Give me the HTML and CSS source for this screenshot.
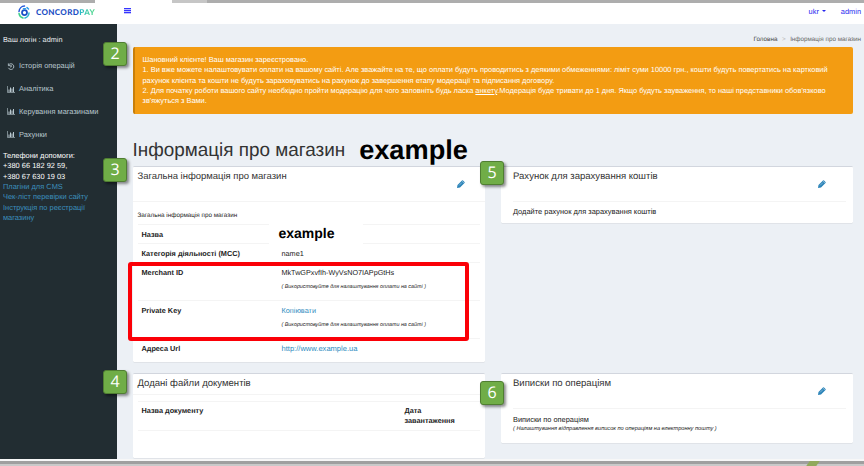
FILE: index.html
```html
<!DOCTYPE html>
<html lang="uk">
<head>
<meta charset="utf-8">
<title>ConcordPay</title>
<link rel="stylesheet" href="styles.css">
</head>
<body>
<svg class="defs" width="0" height="0">
  <symbol id="chart" viewBox="0 0 16 14"><path d="M1 0v13h15" fill="none" stroke="currentColor" stroke-width="1.2"/><path d="M3 7h2v5H3zM6 3h2v9H6zM9 5h2v7H9zM12 2h2v10h-2z" fill="currentColor"/></symbol>
  <symbol id="pencil" viewBox="0 0 16 16"><path d="M0 16l1-6 9-9q1-1 2 0l3 3q1 1 0 2l-9 9z" fill="currentColor"/><path d="M4 11l6-6M10 2l4 4" stroke="#fff" stroke-width=".8"/></symbol>
</svg>
<div class="page">
  <div class="edge"><i class="edge-gap"></i><i class="edge-light"></i></div>
  <header class="top">
    <a class="logo">
      <svg class="logo-mark" viewBox="0 0 24 28" fill="none" stroke-linecap="round" stroke-width="3">
        <path d="M13 2A11.500 12 0 0 0 2 13" stroke="#2457d8"/>
        <path d="M2 17A11.500 11.500 0 0 0 10 26" stroke="#3fd08a"/>
        <path d="M14 26A11.500 11.500 0 0 0 22 16" stroke="#2fb7d3"/>
        <circle cx="13" cy="15" r="5" stroke="#1c52c8" stroke-width="3.500"/>
        <path d="M11 7.500h4M18 5l3 3" stroke="#2b9bea"/>
      </svg>
      <span class="logo-text">CONCORD<b>PAY</b></span>
    </a>
    <span class="burger"><i></i><i></i><i></i></span>
    <nav class="user"><span class="lang">ukr</span><i class="caret"></i><span class="name">admin</span></nav>
  </header>
  <div class="body">
    <aside class="side">
      <div class="login">Ваш логін : admin</div>
      <a class="item"><svg viewBox="0 0 16 16"><path d="M3 4a6.500 6.500 0 1 1-1 7M2 1v5h5M8.500 5v4H6" fill="none" stroke="currentColor" stroke-width="2"/></svg><span>Історія операцій</span></a>
      <a class="item"><svg><use href="#chart"/></svg><span>Аналітика</span></a>
      <a class="item"><svg><use href="#chart"/></svg><span>Керування магазинами</span></a>
      <a class="item"><svg><use href="#chart"/></svg><span>Рахунки</span></a>
      <div class="help">
        <div>Телефони допомоги:</div><div>+380 66 182 92 59,</div><div>+380 67 630 19 03</div>
        <a>Плагіни для CMS</a><a>Чек-ліст перевірки сайту</a><a>Інструкція по реєстрації<br>магазину</a>
      </div>
    </aside>
    <main class="main">
      <div class="crumbs"><span class="home">Головна</span><i>&gt;</i><span>Інформація про магазин</span></div>
      <div class="alert">
        <div>Шановний клієнте! Ваш магазин зареєстровано.</div>
        <div>1. Ви вже можете налаштовувати оплати на вашому сайті. Але зважайте на те, що оплати будуть проводитись з деякими обмеженнями: ліміт суми 10000 грн., кошти будуть повертатись на картковий</div>
        <div>рахунок клієнта та кошти не будуть зараховуватись на рахунок до завершення етапу модерації та підписання договору.</div>
        <div>2. Для початку роботи вашого сайту необхідно пройти модерацію для чого заповніть будь ласка <u>анкету</u>.Модерація буде тривати до 1 дня. Якщо будуть зауваження, то наші представники обов'язково</div>
        <div>зв'яжуться з Вами.</div>
      </div>
      <h1><span>Інформація про магазин</span><b>example</b></h1>
      <div class="cards">
        <section class="card info">
          <div class="head tall"><h2>Загальна інформація про магазин</h2><svg class="edit"><use href="#pencil"/></svg></div>
          <div class="caption">Загальна інформація про магазин</div>
          <div class="table">
            <div class="row"><b>Назва</b><strong class="shop">example</strong></div>
            <div class="row"><b>Категорія діяльності (MCC)</b><span>name1</span></div>
            <div class="row high"><b>Merchant ID</b><div><span class="mid">MkTwGPxvfIh-WyVsNO7IAPpGtHs</span><em>( Використовуйте для налаштування оплати на сайті )</em></div></div>
            <div class="row high"><b>Private Key</b><div><a>Копіювати</a><em>( Використовуйте для налаштування оплати на сайті )</em></div></div>
            <div class="row"><b>Адреса Url</b><a class="url">http://www.example.ua</a></div>
          </div>
        </section>
        <section class="card account">
          <div class="head tall"><h2>Рахунок для зарахування коштів</h2><svg class="edit"><use href="#pencil"/></svg></div>
          <p>Додайте рахунок для зарахування коштів</p>
        </section>
        <section class="card docs">
          <div class="head"><h2>Додані файли документів</h2></div>
          <div class="doc-row"><b>Назва документу</b><b>Дата<br>завантаження</b></div>
        </section>
        <section class="card reports">
          <div class="head tall"><h2>Виписки по операціям</h2><svg class="edit"><use href="#pencil"/></svg></div>
          <p>Виписки по операціям</p>
          <em>( Налаштування відправлення виписок по операціям на електронну пошту )</em>
        </section>
      </div>
    </main>
  </div>
  <footer class="bottom"><div class="bottom-bar"><i></i></div></footer>
  <div class="frame"></div>
  <span class="badge b2">2</span>
  <span class="badge b3">3</span>
  <span class="badge b4">4</span>
  <span class="badge b5">5</span>
  <span class="badge b6">6</span>
</div>
</body>
</html>
```
FILE: styles.css
```css
* { box-sizing: border-box; }
body { margin: 0; font-family: "Liberation Sans", Arial, sans-serif; text-rendering: geometricPrecision; color: #333; font-size: 7.3px; overflow: hidden; }
h1, h2, p { margin: 0; font-weight: 400; }
i { font-style: normal; }
.defs { position: absolute; }
.page { position: relative; width: 864px; height: 466px; display: flex; flex-direction: column; background: #fff; white-space: nowrap; }
.edge { height: 3px; flex: none; background: #adadad; display: flex; }
.edge-gap { width: 77px; margin-left: 95px; background: #fff; }
.edge-light { width: 35px; background: #c6c6c6; }
.top { height: 21px; flex: none; display: flex; align-items: flex-start; }
.logo { display: flex; width: 117px; padding: 2px 0 0 18px; }
.logo-mark { width: 12px; height: 14px; margin-right: 6px; }
.logo-text { font: 900 8px/14px Lato, sans-serif; letter-spacing: .35px; color: #1c4fc4; }
.logo-text b { font-weight: 900; background: linear-gradient(90deg, #28b8cc, #4fd984); background-clip: text; -webkit-background-clip: text; color: transparent; }
.burger { width: 7px; margin: 5px 0 0 7px; display: flex; flex-direction: column; gap: 1px; }
.burger i { height: 1px; background: #3535ff; box-shadow: 0 .5px 0 #8686ff; }
.user { margin-left: auto; display: flex; align-items: center; padding-right: 3px; height: 16px; color: #2626ef; font-size: 7.4px; }
.caret { border: 2.500px solid transparent; border-top-color: #2626ef; border-bottom: 0; margin: 0 15px 0 3px; }
.body { height: 435px; flex: none; display: flex; }
.side { width: 117px; flex: none; background: #222d32; color: #b8c7ce; padding: 10px 0 0 3px; line-height: 12px; }
.login { color: #e9edef; font-size: 7.3px; margin-bottom: 9px; }
.item { display: flex; align-items: center; height: 22.8px; padding-left: 4px; font-size: 7.45px; }
.item svg { width: 8px; height: 7px; margin-right: 4px; }
.help { color: #fff; font-size: 7.45px; line-height: 10.3px; margin-top: 5px; }
.help a { display: block; color: #3c8dbc; }
.main { flex: 1; background: #ecf0f5; padding: 0 11px 0 15.500px; }
.crumbs { height: 23px; padding-top: 11px; display: flex; justify-content: flex-end; margin-right: -8px; font-size: 6.3px; line-height: 9px; color: #666; }
.crumbs i { color: #bbb; margin: 0 4.500px; }
.home { color: #444; }
.alert { height: 67px; background: #f39c12; border-left: 2.500px solid #c87f0a; border-radius: 2px; color: #fff; padding: 8px 8px; line-height: 10.35px; font-size: 7.41px; }
h1 { height: 52px; display: flex; align-items: flex-end; line-height: 30px; font-size: 18.9px; }
h1 b { font-size: 27.2px; color: #000; margin-left: 14px; line-height: 32px; }
.cards { display: grid; grid-template-columns: 352.500px 352.500px; grid-template-rows: 196px 86px; justify-content: space-between; row-gap: 11px; align-items: start; }
.card { background: #fff; border-top: 1.500px solid #d2d6de; border-radius: 1.500px; box-shadow: 0 .5px .5px rgba(0,0,0,.1); color: #222; }
.head { height: 21px; padding: 4px 20px 0 5px; display: flex; justify-content: space-between; border-bottom: 1px solid #f4f4f4; }
.head.tall { height: 34.500px; }
h2 { font-size: 9.55px; line-height: 12px; color: #333; }
.edit { width: 8px; height: 8px; margin-top: 9px; color: #2a83b8; }
.info { height: 196px; }
.info h2 { font-size: 9.48px; }
.caption { padding-left: 5px; height: 22.500px; line-height: 28px; font-size: 6.33px; }
.table { margin: 0 5px; }
.row { display: grid; grid-template-columns: 140px 1fr; height: 19px; border-top: 1px solid #f4f4f4; padding: 4.500px 0 0 4px; line-height: 10px; }
.row.high { height: 38.100px; }
.row a { color: #2e8cc0; }
.row em { display: block; font-size: 5.38px; margin-top: 4.500px; }
.row .url { font-size: 7.55px; }
.mid { font-size: 7.22px; }
.shop { width: 94px; height: 22px; margin: -7px 0 0 -13px; padding: 2px 0 0 10px; background: #fff; font-size: 14px; color: #000; line-height: 16px; }
.account { height: 57px; }
.account .head, .reports .head { padding-left: 0; padding-right: 20px; margin-right: 7px; margin-left: 12.500px; }
.account p { padding: 5px 0 0 12.500px; line-height: 10px; font-size: 7.45px; }
.docs { height: 85px; }
.doc-row { display: grid; grid-template-columns: 263px 1fr; margin: 6px 5px 0; height: 29.500px; border: solid #f4f4f4; border-width: 1px 0; padding: 4px 0 0 4px; line-height: 10.4px; }
.reports { height: 70px; }
.reports p { padding: 5px 0 0 12.500px; line-height: 11px; font-size: 7.4px; }
.reports em { display: block; padding-left: 12.500px; font-size: 5.63px; line-height: 8px; }
.bottom { height: 7px; flex: none; padding-top: 2px; background: #f7f7f7; }
.bottom-bar { height: 5px; background: linear-gradient(#9f9f9f 0 3px, #c9c9c9 3px); }
.bottom-bar i { display: block; width: 10px; height: 5px; margin-left: 808px; background: #91a95b; transform: skewX(-35deg); }
.frame { position: absolute; left: 128px; top: 262px; width: 341px; height: 79px; border: 4px solid #fb0007; border-radius: 3px; }
.badge { position: absolute; width: 24px; height: 24px; background: #70ad47; border: 1.500px solid #507e32; border-radius: 3px; box-shadow: 2px 2px 3px rgba(0,0,0,.45); color: #fff; font: 16px/21px "Open Sans", sans-serif; text-align: center; }
.b2 { left: 103px; top: 42px; }
.b3 { left: 103px; top: 158px; }
.b4 { left: 103px; top: 370px; }
.b5 { left: 480px; top: 161px; }
.b6 { left: 480px; top: 381px; }
```
